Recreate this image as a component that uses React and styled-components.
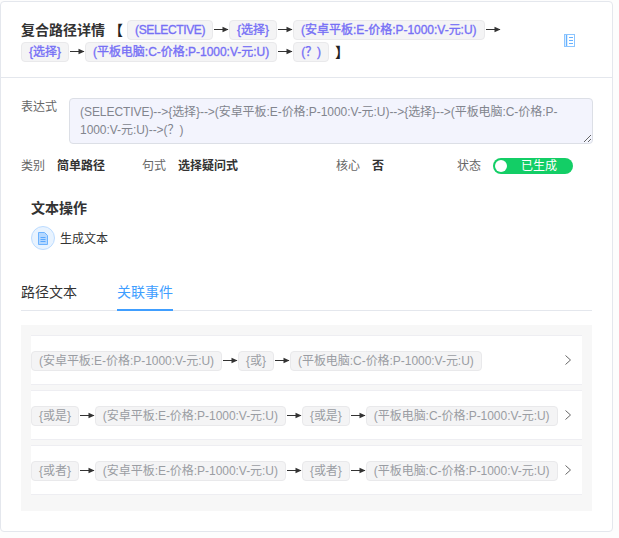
import React from "react";
import styled, { createGlobalStyle } from "styled-components";

const Global = createGlobalStyle`
  html, body { margin: 0; padding: 0; background: #fdfdfd; }
  body { font-family: "Liberation Sans", "Noto Sans CJK SC", sans-serif; font-size: 12px; color: #333; }
  * { box-sizing: border-box; }
`;

const Page = styled.div`
  width: 619px;
  height: 538px;
  padding: 1px 6px 6px 0;
`;
const Card = styled.div`
  height: 531px;
  background: #fff;
  border: 1px solid #e4e7ed;
  border-radius: 4px;
`;
const Header = styled.div`
  height: 76px;
  border-bottom: 1px solid #e4e7ed;
  display: flex;
  justify-content: space-between;
  padding: 18px 37px 0 20px;
`;
const Chain = styled.div`
  width: 490px;
  display: flex;
  flex-wrap: wrap;
  align-items: center;
  align-content: flex-start;
  row-gap: 2px;
`;
const Title = styled.span`
  font-size: 14px;
  font-weight: 700;
  color: #333;
  line-height: 20px;
  margin-right: 4px;
  white-space: nowrap;
`;
const Bracket = styled.span`
  font-size: 14px;
  font-weight: 700;
  color: #222;
  width: ${(p) => p.$w}px;
  line-height: 20px;
  margin-left: ${(p) => p.$ml || 0}px;
  white-space: nowrap;
`;
const Tag = styled.span`
  display: inline-flex;
  align-items: center;
  height: 20px;
  padding: 0 7px;
  background: #f4f4f5;
  border: 1px solid #e9e9eb;
  border-radius: 4px;
  font-size: 12px;
  line-height: 18px;
  letter-spacing: ${(p) => (p.$tight ? "-0.36px" : p.$muted ? "-0.04px" : "-0.02px")};
  white-space: nowrap;
  color: ${(p) => (p.$muted ? "#9a9da3" : "#7670f5")};
  -webkit-text-stroke: ${(p) => (p.$muted ? "0" : "0.35px #7670f5")};
`;
const ArrowBox = styled.svg`
  width: 16px;
  height: 8px;
  flex: none;
  display: block;
`;
const Arrow = () => (
  <ArrowBox viewBox="0 0 16 8">
    <path d="M1 3.500h14" stroke="#333" strokeWidth="1" />
    <path d="M9.500 .8 15.500 3.500 9.500 6.200z" fill="#333" />
  </ArrowBox>
);
const DocIcon = styled.svg`
  width: 11px;
  height: 13px;
  margin-top: 14px;
`;
const Body = styled.div`
  padding: 20px 20px 0 20px;
`;
const ExprRow = styled.div`
  display: flex;
  gap: 12px;
`;
const Label = styled.span`
  font-size: 12px;
  color: #666;
  line-height: 18px;
  white-space: nowrap;
`;
const Expr = styled.textarea`
  flex: none;
  width: 524px;
  height: 46px;
  padding: 4px 10px;
  border: 1px solid #dcdfe6;
  border-radius: 4px;
  background: #f3f4fd;
  color: #82858e;
  font: 12px/18px "Liberation Sans", "Noto Sans CJK SC", sans-serif;
  letter-spacing: -0.06px;
  outline: none;
  overflow: hidden;
`;
const Meta = styled.div`
  display: grid;
  grid-template-columns: 121px 194px 121px 1fr;
  margin-top: 14px;
  height: 16px;
  align-items: center;
`;
const MetaItem = styled.div`
  display: flex;
  align-items: center;
  gap: 12px;
  height: 16px;
`;
const Strong = styled.span`
  font-size: 12px;
  font-weight: 700;
  color: #333;
  line-height: 18px;
  white-space: nowrap;
`;
const Toggle = styled.div`
  width: 80px;
  height: 16px;
  border-radius: 8px;
  background: #13ce66;
  color: #fff;
  font-size: 12px;
  line-height: 16px;
  padding-left: 28px;
  position: relative;
`;
const Knob = styled.span`
  position: absolute;
  left: 2px;
  top: 2px;
  width: 12px;
  height: 12px;
  border-radius: 50%;
  background: #fff;
`;
const Ops = styled.div`
  padding: 0 10px;
  margin-top: 26px;
`;
const OpsTitle = styled.div`
  font-size: 14px;
  font-weight: 700;
  color: #333;
  line-height: 16px;
`;
const OpButton = styled.div`
  display: flex;
  align-items: center;
  gap: 5px;
  margin-top: 10px;
  font-size: 12px;
  line-height: 18px;
  color: #333;
`;
const OpLabel = styled.span`
  padding-top: 2px;
`;
const OpCircle = styled.span`
  width: 24px;
  height: 24px;
  border-radius: 50%;
  background: #e8f3ff;
  border: 1px solid #bcdcff;
  display: flex;
  align-items: center;
  justify-content: center;
`;
const Tabs = styled.div`
  display: flex;
  gap: 40px;
  margin-top: 21px;
  height: 40px;
  border-bottom: 1px solid #e4e7ed;
`;
const TabItem = styled.div`
  font-size: 14px;
  line-height: 42px;
  height: 40px;
  color: ${(p) => (p.$active ? "#409eff" : "#333")};
  border-bottom: 2px solid ${(p) => (p.$active ? "#409eff" : "transparent")};
`;
const Events = styled.div`
  margin-top: 14px;
  background: #f7f7f7;
  padding: 10px 10px 16px;
  display: flex;
  flex-direction: column;
  gap: 5px;
`;
const Row = styled.div`
  height: 50px;
  background: #fff;
  border-top: 1px solid #eeeef2;
  border-bottom: 1px solid #eeeef2;
  display: flex;
  align-items: center;
  justify-content: space-between;
  padding: 1px 9px 0 0;
`;
const RowChain = styled.div`
  display: flex;
  align-items: center;
`;
const Chevron = styled.svg`
  width: 10px;
  height: 12px;
  flex: none;
  margin-top: -1px;
`;

const events = [
  ["(安卓平板:E-价格:P-1000:V-元:U)", "{或}", "(平板电脑:C-价格:P-1000:V-元:U)"],
  ["{或是}", "(安卓平板:E-价格:P-1000:V-元:U)", "{或是}", "(平板电脑:C-价格:P-1000:V-元:U)"],
  ["{或者}", "(安卓平板:E-价格:P-1000:V-元:U)", "{或者}", "(平板电脑:C-价格:P-1000:V-元:U)"],
];
const head1 = ["(SELECTIVE)", "{选择}", "(安卓平板:E-价格:P-1000:V-元:U)"];
const head2 = ["{选择}", "(平板电脑:C-价格:P-1000:V-元:U)", "(？)"];
const meta = [
  ["类别", "简单路径"],
  ["句式", "选择疑问式"],
  ["核心", "否"],
];

export default function App() {
  return (
    <Page>
      <Global />
      <Card>
        <Header>
          <Chain>
            <Title>复合路径详情</Title>
            <Bracket $w={18}>【</Bracket>
            {head1.map((t, i) => (
              <React.Fragment key={t}>
                <Tag $tight={i === 0}>{t}</Tag>
                <Arrow />
              </React.Fragment>
            ))}
            {head2.map((t, i) => (
              <React.Fragment key={t}>
                <Tag>{t}</Tag>
                {i < 2 && <Arrow />}
              </React.Fragment>
            ))}
            <Bracket $w={14} $ml={6}>】</Bracket>
          </Chain>
          <DocIcon viewBox="0 0 11 13">
            <rect x="0.5" y="0.5" width="10" height="12" fill="#fff" stroke="#8cc5ff" />
            <path d="M2.500 1v11" stroke="#66b1ff" strokeWidth="1.500" />
            <path d="M5 3.500h4M5 6.500h4M5 9.500h4" stroke="#66b1ff" />
          </DocIcon>
        </Header>
        <Body>
          <ExprRow>
            <Label>表达式</Label>
            <Expr
              readOnly
              value="(SELECTIVE)-->{选择}-->(安卓平板:E-价格:P-1000:V-元:U)-->{选择}-->(平板电脑:C-价格:P-1000:V-元:U)-->(？)"
            />
          </ExprRow>
          <Meta>
            {meta.map(([k, v]) => (
              <MetaItem key={k}>
                <Label>{k}</Label>
                <Strong>{v}</Strong>
              </MetaItem>
            ))}
            <MetaItem>
              <Label>状态</Label>
              <Toggle>
                <Knob />
                已生成
              </Toggle>
            </MetaItem>
          </Meta>
          <Ops>
            <OpsTitle>文本操作</OpsTitle>
            <OpButton>
              <OpCircle>
                <svg width="12" height="13" viewBox="0 0 12 13">
                  <path d="M1.500 .5h6l3 3v9h-9z" fill="#b5d8ff" stroke="#6db3ff" />
                  <path d="M3.500 5.500h5M3.500 7.500h5M3.500 9.500h5" stroke="#5aa8ff" />
                </svg>
              </OpCircle>
              <OpLabel>生成文本</OpLabel>
            </OpButton>
          </Ops>
          <Tabs>
            <TabItem>路径文本</TabItem>
            <TabItem $active>关联事件</TabItem>
          </Tabs>
          <Events>
            {events.map((r, idx) => (
              <Row key={idx}>
                <RowChain>
                  {r.map((t, i) => (
                    <React.Fragment key={i}>
                      <Tag $muted>{t}</Tag>
                      {i < r.length - 1 && <Arrow />}
                    </React.Fragment>
                  ))}
                </RowChain>
                <Chevron viewBox="0 0 10 12">
                  <path d="M2.500 1.500 7.500 6l-5 4.500" fill="none" stroke="#666" strokeWidth="1" />
                </Chevron>
              </Row>
            ))}
          </Events>
        </Body>
      </Card>
    </Page>
  );
}
